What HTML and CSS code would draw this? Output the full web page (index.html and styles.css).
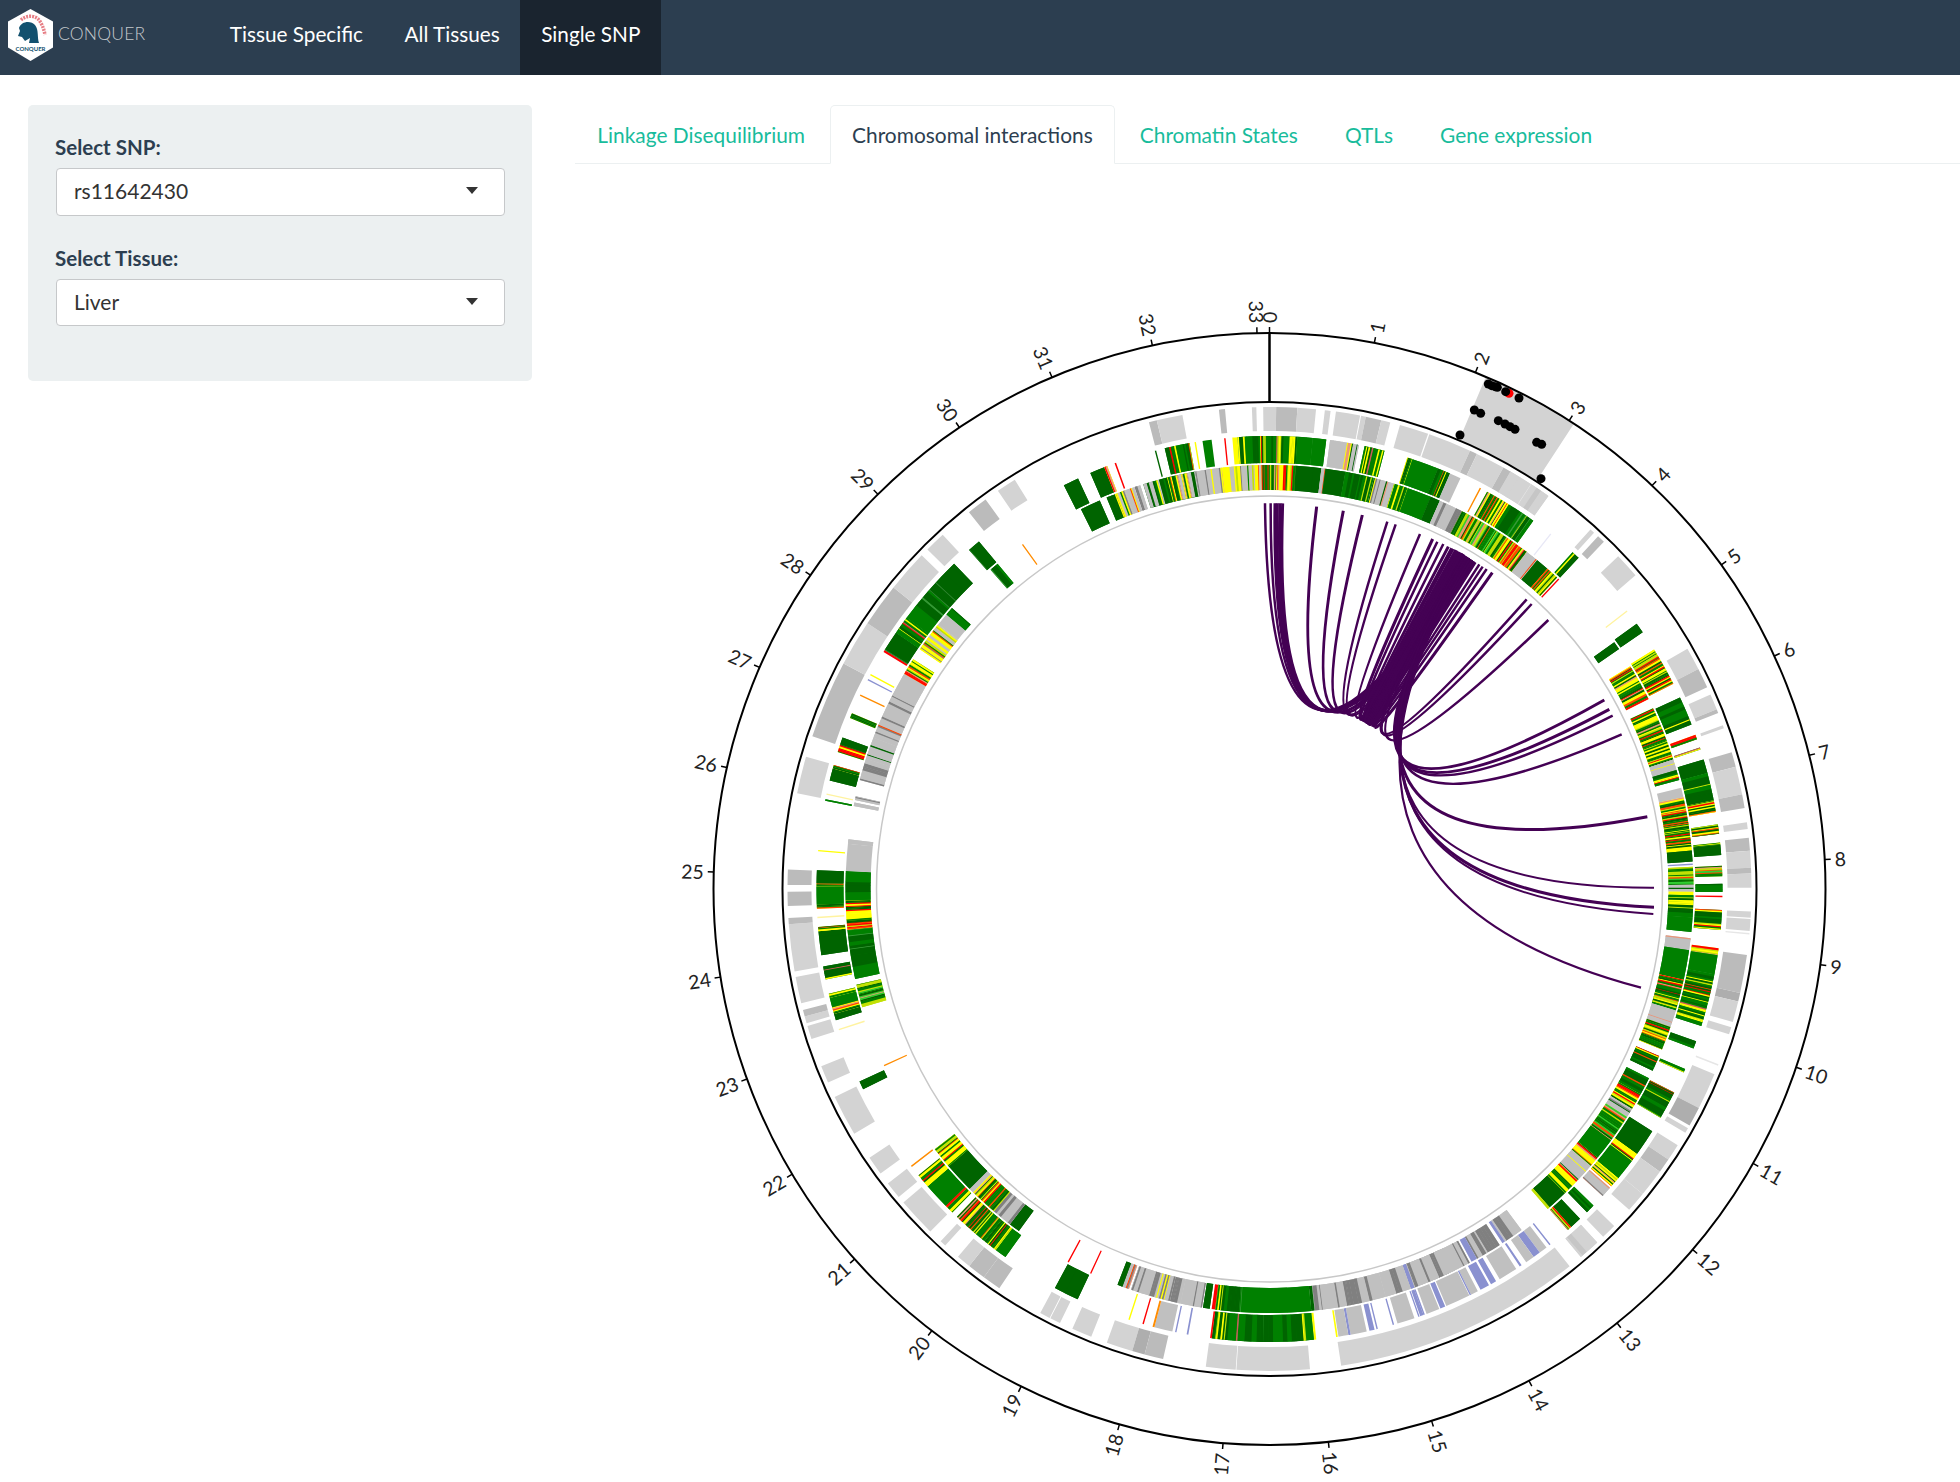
FILE: index.html
```html
<!DOCTYPE html>
<html lang="en">
<head>
<meta charset="utf-8">
<title>CONQUER - Single SNP</title>
<link rel="stylesheet" href="styles.css">
</head>
<body>
<nav class="navbar">
  <a class="brand" href="#">
    <svg class="logo" viewBox="0 0 46 54" width="46" height="54" aria-hidden="true">
      <polygon points="22.500,1 45,13.500 45,39.500 22.500,53 0,39.500 0,13.500" fill="#fff"/>
      <path d="M13 12 C18 7 27 7 31 12 C34 16 36 21 37 27" fill="none" stroke="#e77f86" stroke-width="3.500" stroke-dasharray="2 1"/>
      <path d="M11 20 C13 13 23 12 27 17 C31 22 29 29 31 35 L21 35 L22 30 L17 33 L14 29 L10 28 L12 23 Z" fill="#12516f"/>
      <text class="logo-text" x="22.500" y="43" text-anchor="middle">CONQUER</text>
    </svg>
    <span class="brand-name">CONQUER</span>
  </a>
  <ul class="nav-links">
    <li><a href="#">Tissue Specific</a></li>
    <li><a href="#">All Tissues</a></li>
    <li class="active"><a href="#">Single SNP</a></li>
  </ul>
</nav>
<main class="layout">
  <aside class="sidebar">
    <div class="field">
      <label>Select SNP:</label>
      <div class="select"><span>rs11642430</span><i class="caret"></i></div>
    </div>
    <div class="field">
      <label>Select Tissue:</label>
      <div class="select"><span>Liver</span><i class="caret"></i></div>
    </div>
  </aside>
  <section class="panel">
    <ul class="tabs">
      <li><a href="#">Linkage Disequilibrium</a></li>
      <li class="active"><a href="#">Chromosomal interactions</a></li>
      <li><a href="#">Chromatin States</a></li>
      <li><a href="#">QTLs</a></li>
      <li><a href="#">Gene expression</a></li>
    </ul>
    <svg id="circos" class="circos" viewBox="575 170 1385 1312" width="1385" height="1312"></svg>
  </section>
</main>
<script src="chart.js"></script>
</body>
</html>
```
FILE: styles.css
```css
* { box-sizing: border-box; }
html, body { margin: 0; padding: 0; }
body {
  height: 1482px;
  overflow: hidden;
  font-family: Lato, "Liberation Sans", sans-serif;
  font-size: 21px;
  color: #2c3e50;
  background: #fff;
}
a { text-decoration: none; color: inherit; }
ul { list-style: none; margin: 0; padding: 0; }

.navbar {
  display: flex;
  align-items: stretch;
  height: 75px;
  background: #2c3e50;
}
.brand {
  display: flex;
  align-items: center;
  width: 209px;
  padding-left: 8px;
  padding-bottom: 5px;
  gap: 4px;
}
.logo { display: block; }
.logo-text { font: 700 6px Lato, sans-serif; fill: #12516f; }
.brand-name { color: #c3c8cc; font-size: 17.500px; font-weight: 300; letter-spacing: .2px; padding-bottom: 3px; }
.nav-links { display: flex; font-size: 20.750px; }
.nav-links a {
  display: flex;
  align-items: center;
  height: 75px;
  padding: 0 20.750px 7px;
  color: #fff;
}
.nav-links .active a { background: #1a242f; }

.layout {
  display: flex;
  padding: 30px 0 0 28px;
  gap: 43px;
}
.sidebar {
  flex: none;
  width: 504px;
  height: 276px;
  padding: 27px 27px 0 28px;
  background: #ecf0f1;
  border-radius: 5px;
}
.field { margin-bottom: 27px; }
.field label { display: block; height: 36px; margin-left: -1px; line-height: 30px; font-size: 20.500px; font-weight: 700; }
.select {
  display: flex;
  align-items: center;
  justify-content: space-between;
  height: 47.500px;
  padding: 0 26px 2px 17px;
  background: #fff;
  border: 1px solid #c6c8ca;
  border-radius: 4px;
  color: #333;
}
.caret {
  width: 0;
  height: 0;
  border-left: 6.500px solid transparent;
  border-right: 6.500px solid transparent;
  border-top: 7.500px solid #333;
}

.panel { flex: 1; min-width: 0; }
.tabs {
  display: flex;
  height: 59px;
  font-size: 20.900px;
  border-bottom: 1px solid #ecf0f1;
}
.tabs li { margin-right: 2.500px; }
.tabs a {
  display: flex;
  align-items: center;
  height: 59px;
  padding: 0 21.300px;
  color: #18bc9c;
  border: 1px solid transparent;
  border-radius: 5px 5px 0 0;
}
.tabs .active a {
  color: #2c3e50;
  background: #fff;
  border-color: #ecf0f1 #ecf0f1 #fff;
}
.circos { display: block; margin-top: 6px; }

.ring { fill: none; stroke: #000; stroke-width: 2; }
.ring-inner { fill: none; stroke: #c8c8c8; stroke-width: 1.500; }
.tick { stroke: #000; stroke-width: 1.500; }
.zero { stroke: #000; stroke-width: 2.500; }
.tick-label { font: 19.500px Lato, sans-serif; fill: #222; dominant-baseline: central; }
.highlight { fill: #d3d3d3; }
.dot { fill: #000; }
.dot-snp { fill: #f00; }
.link { fill: none; stroke: #440154; }
```
FILE: chart.js
```js
(function () {
  var CX = 1269.5, CY = 889, UNIT = 10.87;
  var svg = document.getElementById('circos');
  var NS = 'http://www.w3.org/2000/svg';
  var TRACKS = { G: [458, 482], M: [426, 453], I: [399, 424] };
  // Source crops: data points below are given as [crop, x, y, x, y, palette]
  var CROP = {
    z2: [1140, 280], z3: [1500, 620], z4: [740, 500], z7: [1200, 480],
    z8: [770, 1000], z9: [1400, 1030], z10: [1130, 1240], z11: [770, 880]
  };

  var PAL = {
    Q:  [['#d3d3d3', 6, 4, 14], ['#c6c6c6', 2, 2, 6], ['#bbbbbb', 2, 2, 6], ['#e4e4e4', .6, .6, 1]],
    S:  [['#006400', 8, 8, 24], ['#2f852f', .6, .6, 1]],
    V:  [['#008000', 8, 8, 24], ['#3f9a3f', .6, .6, 1]],
    g:  [['#008000', 5, 2, 9], ['#006400', 4, 2, 8], ['#3a9a3a', 1.4, .6, 1], ['#c2e105', .6, .6, 1]],
    h:  [['#008000', 4, 3, 10], ['#006400', 3, 2, 7], ['#c2e105', 1, 1, 2.500], ['#ffff00', .4, .8, 1.500]],
    m:  [['#008000', 3.5, 1, 3.500], ['#006400', 3.5, 1, 3.500], ['#ffff00', 1.5, .6, 1.800], ['#c2e105', .9, .7, 1.500], ['#ff0000', .6, .5, 1.200], ['#ff4500', .5, .5, 1.200], ['#cd5c5c', .3, .8, 1.500]],
    r:  [['#ffff00', 3, .7, 2], ['#ff0000', 1.4, .6, 1.500], ['#ff4500', 1, .6, 1.500], ['#008000', 2.2, .7, 2], ['#006400', 1.8, .7, 2], ['#c2e105', .8, .7, 1.500], ['#e9967a', .5, .7, 1.500]],
    l:  [['#c2e105', 3, .8, 2], ['#008000', 3, .8, 2.500], ['#ff4500', 1, .6, 1.500], ['#e9967a', 1, .8, 1.500], ['#32cd32', 2, .8, 2], ['#006400', 1.5, .8, 2]],
    j:  [['#ffff00', 3, .8, 2], ['#c0c0c0', 3, 1, 3], ['#c2e105', 1.5, 1, 2], ['#008000', 1.2, 1, 2], ['#808080', .6, .8, 1.500], ['#ff4500', .6, .7, 1.200]],
    n:  [['#006400', 2.5, 1, 2.500], ['#008000', 2, 1, 2.500], ['#ffff00', 2, .7, 1.500], ['#c0c0c0', 2, 1, 4], ['#ff4500', .6, .7, 1.200], ['#e9967a', .6, .7, 1.200]],
    x:  [['#c0c0c0', 7, 2, 8], ['#808080', 2.5, .7, 2.500]],
    d:  [['#c0c0c0', 5, 1.5, 6], ['#808080', 4, .8, 5]],
    y:  [['#c0c0c0', 5, 1.5, 5], ['#808080', 1.5, .8, 2], ['#ffff00', 1.2, .7, 1.500], ['#ff4500', .6, .6, 1.200], ['#e9967a', 1, .8, 1.500], ['#006400', .6, .8, 1.500]]
  };
  var COL = {
    L: '#d3d3d3', D: '#bbbbbb', B: '#aeaeae', W: '#e6e6e6',
    A: '#006400', E: '#008000', Y: '#ffff00', R: '#ff0000', O: '#ff8c00',
    C: '#c0c0c0', H: '#808080', N: '#8a91d0', K: '#c2e105', F: '#e8e8f6', P: '#fff3a0'
  };

  var G = [
    ['z2',25,420,50,420,'D'],['z2',50,420,130,420,'L'],['z2',240,420,258,420,'D'],['z2',337,420,350,420,'L'],
    ['z2',370,420,408,420,'L'],['z2',408,420,470,420,'D'],['z2',470,420,525,420,'L'],['z2',550,430,567,430,'L'],
    ['z2',583,430,655,435,'L'],['z2',658,435,672,437,'L'],['z2',672,437,718,445,'D'],['z2',718,445,745,450,'L'],
    ['z2',770,470,852,497,'L'],['z2',856,497,975,545,'L'],['z2',975,545,995,555,'D'],['z2',995,555,1075,590,'L'],['z2',1075,590,1100,600,'D'],
    ['z2',1095,603,1208,672,'Q'],['z7',1150,172,1162,180,'L'],['z7',1172,193,1190,208,'D'],
    ['z2',1407,855,1462,907,'L'],
    ['z3',532,104,560,165,'L'],['z3',560,165,588,217,'D'],['z3',596,239,615,282,'L'],['z3',615,282,622,292,'D'],
    ['z3',632,329,637,337,'L'],
    ['z3',660,407,669,450,'D'],['z3',669,450,690,530,'L'],['z3',690,530,697,570,'D'],
    ['z3',705,612,706,632,'L'],['z3',711,657,713,695,'D'],['z3',713,695,716,745,'L'],['z3',716,745,717,762,'D'],['z3',717,762,718,803,'L'],
    ['z3',715,873,715,891,'L'],['z3',714,895,714,930,'L'],['z3',712,936,711,940,'W'],
    ['z3',703,1000,680,1110,'D'],['z3',680,1110,675,1135,'B'],['z3',675,1135,660,1195,'L'],['z3',655,1210,652,1232,'L'],
    ['z3',622,1320,618,1323,'W'],
    ['z9',908,118,860,215,'L'],['z9',860,215,840,270,'B'],['z9',830,275,825,290,'L'],
    ['z9',800,325,770,365,'L'],['z9',770,365,745,400,'D'],['z9',745,400,695,465,'L'],['z9',695,465,660,515,'L'],
    ['z9',615,561,585,595,'L'],['z9',563,606,520,654,'Q'],['z9',487,681,-182,970,'L'],
    ['z10',232,345,320,348,'L'],['z10',322,348,537,352,'L'],
    ['z8',1022,996,1095,1025,'L'],['z8',1095,1025,1130,1040,'B'],['z8',1130,1040,1185,1052,'D'],
    ['z8',977,977,922,953,'L'],['z8',886,936,858,922,'L'],['z8',856,920,828,907,'L'],
    ['z8',710,832,665,800,'D'],['z8',665,800,620,770,'D'],['z8',620,770,588,742,'L'],
    ['z8',550,710,540,694,'L'],['z8',505,670,430,582,'L'],['z8',415,567,381,529,'L'],['z8',360,500,329,453,'L'],
    ['z8',283,383,227,275,'L'],['z8',207,233,188,185,'L'],
    ['z11',159,466,147,428,'L'],['z11',144,420,140,400,'L'],['z11',140,400,135,381,'D'],
    ['z11',130,361,114,284,'L'],['z11',110,268,92,130,'L'],['z11',92,130,92,112,'D'],
    ['z4',180,1175,180,1217,'D'],['z4',180,1110,180,1155,'D'],
    ['z4',208,887,233,780,'L'],['z4',253,721,338,505,'D'],['z4',338,505,405,385,'L'],['z4',405,385,495,290,'D'],['z4',495,290,571,191,'L'],
    ['z4',586,172,632,130,'L'],['z4',712,68,756,25,'D']
  ];
  var GD = [[-34.3, -31.9, 'L']];

  var M = [
    ['z2',55,545,'A'],['z2',80,530,155,525,'m'],['z2',172,525,'Y'],['z2',193,520,220,520,'E'],['z2',258,510,'R'],
    ['z2',280,510,295,510,'Y'],['z2',295,510,370,505,'m'],['z2',370,505,470,505,'m'],['z2',470,505,515,510,'V'],['z2',515,510,555,510,'V'],
    ['z2',565,520,650,530,'y'],['z2',665,540,725,545,'m'],
    ['z2',785,585,800,590,'r'],['z2',800,590,880,600,'V'],['z2',880,600,915,615,'m'],['z2',915,615,945,630,'C'],
    ['z2',1005,655,'O'],['z2',1022,670,1090,700,'r'],['z2',1090,700,1160,750,'g'],['z2',1210,790,'F'],['z2',1274,843,1291,860,'m'],
    ['z3',340,5,'P'],['z3',384,30,396,59,'S'],
    ['z3',431,108,487,208,'r'],['z3',506,248,542,326,'m'],['z3',552,357,557,370,'r'],['z3',565,394,567,400,'m'],
    ['z3',575,429,582,470,'S'],['z3',582,470,604,548,'g'],['z3',604,548,611,582,'r'],
    ['z3',618,618,620,646,'m'],['z3',623,671,625,678,'r'],['z3',625,678,626,708,'S'],['z3',628,739,628,770,'l'],['z3',630,792,630,816,'m'],['z3',630,829,'R'],['z3',627,868,626,927,'m'],
    ['z3',618,980,613,1000,'r'],['z3',613,1000,603,1055,'V'],['z3',603,1055,570,1207,'m'],['z3',550,1250,545,1272,'m'],
    ['z9',820,102,817,112,'m'],['z9',788,170,752,246,'m'],
    ['z9',727,285,680,350,'S'],['z9',680,350,665,370,'r'],['z9',665,370,625,420,'V'],['z9',625,420,610,448,'r'],
    ['z9',600,447,580,472,'y'],['z9',553,500,535,520,'m'],['z9',515,540,490,565,'S'],['z9',490,565,480,574,'r'],
    ['z9',427,615,'N'],['z9',417,623,395,635,'C'],['z9',395,635,375,645,'N'],['z9',375,645,352,658,'C'],
    ['z9',342,672,337,676,'N'],['z9',325,680,280,715,'C'],['z9',270,722,255,730,'N'],['z9',250,735,225,748,'N'],
    ['z9',215,748,195,758,'C'],['z9',193,758,'N'],['z9',190,760,125,795,'C'],['z9',122,797,108,803,'N'],['z9',105,805,70,825,'C'],['z9',60,820,'N'],['z9',45,826,'N'],
    ['z10',868,190,858,192,'N'],['z10',840,195,792,215,'C'],['z10',780,218,'N'],['z10',733,232,'N'],['z10',725,232,710,235,'N'],
    ['z10',702,237,655,245,'C'],['z10',655,245,648,245,'N'],['z10',648,245,620,255,'C'],['z10',618,255,613,255,'Y'],
    ['z10',555,262,548,262,'Y'],['z10',548,262,400,260,'h'],['z10',400,260,325,258,'h'],['z10',325,258,250,258,'m'],['z10',250,258,245,258,'R'],
    ['z10',181,250,176,250,'N'],['z10',145,240,'N'],['z10',135,238,82,228,'C'],['z10',82,228,76,228,'O'],['z10',50,215,'R'],['z10',5,215,'Y'],
    ['z8',938,866,872,832,'S'],['z8',728,741,700,720,'V'],['z8',700,720,670,690,'r'],['z8',670,690,640,670,'m'],['z8',640,670,585,625,'r'],
    ['z8',572,612,555,590,'r'],['z8',555,590,500,535,'V'],['z8',500,535,475,502,'r'],['z8',454,476,'O'],
    ['z8',315,250,300,230,'S'],['z8',240,78,'P'],
    ['z11',232,410,228,392,'S'],['z11',228,392,222,372,'r'],['z11',222,372,215,345,'V'],['z11',215,345,212,333,'r'],
    ['z11',204,291,196,253,'m'],['z11',191,220,183,150,'S'],['z11',183,150,181,138,'r'],['z11',178,110,'P'],
    ['z4',267,1225,267,1212,'r'],['z4',267,1212,268,1160,'V'],['z4',268,1160,268,1150,'r'],['z4',268,1150,267,1112,'S'],['z4',270,1055,'Y'],
    ['z4',292,907,'m'],['z4',295,890,'P'],['z4',306,851,313,815,'S'],['z4',313,815,316,805,'r'],
    ['z4',330,768,337,745,'r'],['z4',337,745,342,725,'S'],['z4',364,668,370,654,'r'],['z4',394,601,'O'],['z4',417,556,'N'],['z4',423,541,'Y'],
    ['z4',462,475,466,470,'R'],['z4',466,470,500,420,'S'],['z4',500,420,530,375,'m'],['z4',530,375,590,290,'g'],['z4',590,290,666,216,'S'],
    ['z4',712,178,740,152,'S']
  ];
  var MD = [[-27, -25, 'S'], [-23.3, -21.4, 'S'], [-21.4, -21, 'r'], [-20, -19.8, 'R']];

  var I = [
    ['z2',0,670,15,660,'y'],['z2',15,630,170,600,'n'],['z2',170,600,250,595,'y'],['z2',250,595,365,595,'j'],['z2',365,595,465,600,'r'],
    ['z2',465,600,540,600,'S'],['z2',540,600,552,600,'y'],['z2',552,600,610,610,'S'],['z2',610,610,695,620,'m'],['z2',695,620,755,635,'y'],
    ['z2',755,635,795,650,'m'],['z2',795,650,860,680,'V'],['z2',860,680,885,695,'S'],['z2',885,695,950,725,'d'],
    ['z2',950,725,1075,790,'l'],['z2',1075,790,1150,830,'r'],['z2',1150,830,1180,855,'y'],['z2',1180,855,1210,880,'S'],['z2',1210,880,1240,905,'r'],['z2',1230,925,'R'],
    ['z3',314,87,325,109,'S'],['z3',359,158,410,255,'r'],
    ['z3',426,280,485,430,'r'],['z3',485,430,495,460,'y'],['z3',495,460,501,490,'m'],
    ['z3',508,512,512,540,'C'],['z3',512,540,538,695,'r'],['z3',538,695,540,727,'S'],['z3',540,735,'N'],
    ['z3',540,742,540,795,'l'],['z3',540,795,540,815,'y'],['z3',540,815,540,825,'Y'],['z3',540,825,540,890,'m'],['z3',540,890,537,932,'V'],
    ['z3',534,950,530,985,'y'],['z3',530,985,510,1070,'V'],['z3',510,1070,505,1100,'r'],['z3',505,1100,490,1160,'m'],['z3',490,1160,480,1210,'y'],['z3',480,1210,452,1275,'r'],
    ['z9',740,62,722,105,'m'],['z9',712,127,690,175,'m'],['z9',690,175,660,215,'r'],['z9',660,215,640,235,'y'],['z9',640,235,590,300,'l'],['z9',590,300,600,307,'r'],
    ['z9',600,307,565,360,'V'],['z9',565,360,545,385,'r'],['z9',545,385,505,425,'y'],['z9',505,425,470,465,'r'],['z9',470,465,425,505,'S'],['z9',425,505,420,510,'l'],
    // lower-right grey/blue arc
    ['z9',335,560,285,590,'d'],['z9',285,590,278,595,'N'],['z9',270,600,205,640,'d'],['z9',205,640,190,650,'N'],['z9',185,652,130,690,'x'],['z9',130,690,85,705,'d'],['z9',85,705,30,735,'x'],['z9',30,735,20,740,'N'],
    ['z10',975,90,845,120,'x'],['z10',845,120,835,125,'N'],['z10',835,125,760,145,'d'],['z10',760,145,550,170,'d'],
    ['z10',550,175,540,175,'A'],['z10',540,175,330,175,'V'],['z10',330,175,260,170,'m'],['z10',260,170,250,170,'R'],
    ['z10',245,165,225,165,'S'],['z10',222,165,160,150,'x'],['z10',160,150,130,140,'d'],['z10',130,140,85,125,'y'],['z10',85,125,20,100,'d'],
    ['z8',1090,830,1070,825,'y'],['z8',1070,825,1055,822,'S'],['z8',977,788,'R'],['z8',912,754,'R'],
    ['z8',770,661,745,640,'S'],['z8',745,640,700,600,'d'],['z8',700,600,640,545,'r'],['z8',640,545,630,535,'y'],['z8',630,535,575,465,'S'],['z8',575,465,524,425,'r'],
    ['z8',377,181,'O'],
    ['z11',313,371,296,306,'l'],['z4',378,1430,365,1285,'g'],['z4',365,1285,357,1240,'r'],['z4',357,1240,356,1200,'r'],['z4',356,1200,357,1115,'g'],
    ['z4',357,1115,360,1035,'C'],['z4',360,1035,362,1022,'d'],
    ['z4',378,925,380,915,'y'],['z4',382,908,384,897,'y'],
    ['z4',396,850,420,790,'d'],['z4',420,790,445,730,'y'],['z4',445,730,470,675,'y'],['z4',470,675,525,540,'x'],['z4',525,540,550,497,'r'],
    ['z4',572,470,622,395,'j'],['z4',622,395,645,365,'C'],['z4',645,365,662,347,'m'],
    ['z4',776,237,796,219,'g'],['z4',868,162,'O']
  ];
  var ID = [[-26.4, -23.6, 'S'], [-22.6, -21.2, 'm'], [-21.2, -19.9, 'j'], [-19.9, -18.6, 'y']];

  function el(name, attrs, text) {
    var n = document.createElementNS(NS, name);
    for (var k in attrs) n.setAttribute(k, attrs[k]);
    if (text !== undefined) n.textContent = text;
    svg.appendChild(n);
    return n;
  }
  function pt(r, deg) {
    var a = deg * Math.PI / 180;
    return [CX + r * Math.sin(a), CY - r * Math.cos(a)];
  }
  function angle(crop, x, y) {
    var o = CROP[crop];
    return Math.atan2(o[0] + x / 3 - CX, -(o[1] + y / 3 - CY)) * 180 / Math.PI;
  }
  function f(n) { return n.toFixed(2); }
  function sector(r0, r1, a0, a1, fill) {
    var p = pt(r1, a0), q = pt(r1, a1), s = pt(r0, a1), t = pt(r0, a0);
    var large = a1 - a0 > 180 ? 1 : 0;
    el('path', {
      fill: fill,
      d: 'M' + f(p[0]) + ' ' + f(p[1]) + 'A' + r1 + ' ' + r1 + ' 0 ' + large + ' 1 ' + f(q[0]) + ' ' + f(q[1]) +
         'L' + f(s[0]) + ' ' + f(s[1]) + 'A' + r0 + ' ' + r0 + ' 0 ' + large + ' 0 ' + f(t[0]) + ' ' + f(t[1]) + 'Z'
    });
  }
  var seed = 20477;
  function rnd() {
    seed = (seed + 0x6D2B79F5) | 0;
    var t = Math.imul(seed ^ (seed >>> 15), 1 | seed);
    t = (t + Math.imul(t ^ (t >>> 7), 61 | t)) ^ t;
    return ((t ^ (t >>> 14)) >>> 0) / 4294967296;
  }
  function stripes(r, a0, a1, palette) {
    var mid = (r[0] + r[1]) / 2, pxDeg = Math.PI * mid / 180;
    var total = palette.reduce(function (s, i) { return s + i[1]; }, 0);
    var len = (a1 - a0) * pxDeg, pos = 0;
    sector(r[0], r[1], a0, a1, palette[0][0]);
    while (pos < len) {
      var pick = rnd() * total, k = 0;
      while (pick > palette[k][1]) { pick -= palette[k][1]; k++; }
      var it = palette[k], w = it[2] + rnd() * (it[3] - it[2]);
      var end = Math.min(pos + w, len);
      sector(r[0], r[1], a0 + pos / pxDeg, a0 + Math.min(end + .35, len) / pxDeg, it[0]);
      pos = end;
    }
  }
  function draw(r, a0, a1, key) {
    if (PAL[key]) stripes(r, a0, a1, PAL[key]);
    else sector(r[0], r[1], a0, a1, COL[key]);
  }
  function block(r, row) {
    var a0, a1, key;
    if (row.length === 4) {
      var c = angle(row[0], row[1], row[2]);
      a0 = c - .09; a1 = c + .09; key = row[3];
    } else {
      a0 = angle(row[0], row[1], row[2]);
      a1 = angle(row[0], row[3], row[4]);
      key = row[5];
      var d = ((a1 - a0 + 540) % 360) - 180;
      if (d < 0) { a0 = a1; d = -d; }
      a1 = a0 + d;
    }
    draw(r, a0, a1, key);
  }

  // Tracks
  G.forEach(function (row) { block(TRACKS.G, row); });
  GD.forEach(function (d) { draw(TRACKS.G, d[0], d[1], d[2]); });
  M.forEach(function (row) { block(TRACKS.M, row); });
  MD.forEach(function (d) { draw(TRACKS.M, d[0], d[1], d[2]); });
  I.forEach(function (row) { block(TRACKS.I, row); });
  ID.forEach(function (d) { draw(TRACKS.I, d[0], d[1], d[2]); });

  // Highlighted region and scatter
  var hA = pt(487, 22.9), hB = pt(555, 22.9), hC = pt(555, 33.2), hD = pt(487, 33.2);
  el('path', { class: 'highlight', d: 'M' + f(hA[0]) + ' ' + f(hA[1]) + 'L' + f(hB[0]) + ' ' + f(hB[1]) +
    'A555 555 0 0 1 ' + f(hC[0]) + ' ' + f(hC[1]) + 'L' + f(hD[0]) + ' ' + f(hD[1]) + 'A487 487 0 0 0 ' + f(hA[0]) + ' ' + f(hA[1]) + 'Z' });
  el('circle', { class: 'dot-snp', cx: 1140 + 1107 / 3, cy: 280 + 340 / 3, r: 4.5 });
  [[1045,312],[1055,317],[1065,320],[1072,322],[1097,335],[1137,354],[1003,390],[1022,400],[1075,422],[1095,432],
   [1110,440],[1125,448],[960,465],[1190,487],[1205,493],[1203,596]].forEach(function (d) {
    el('circle', { class: 'dot', cx: 1140 + d[0] / 3, cy: 280 + d[1] / 3, r: 4.5 });
  });

  // Rings, axis
  el('circle', { class: 'ring-inner', cx: CX, cy: CY, r: 393 });
  el('circle', { class: 'ring', cx: CX, cy: CY, r: 487 });
  el('circle', { class: 'ring', cx: CX, cy: CY, r: 556 });
  el('line', { class: 'zero', x1: CX, y1: CY - 487, x2: CX, y2: CY - 556 });
  for (var i = 0; i <= 33; i++) {
    var a = i * UNIT, t0 = pt(556, a), t1 = pt(562, a);
    el('line', { class: 'tick', x1: t0[0], y1: t0[1], x2: t1[0], y2: t1[1] });
    var left = a > 180;
    el('text', {
      class: 'tick-label',
      'text-anchor': left ? 'end' : 'start',
      transform: 'rotate(' + f(a - 90) + ' ' + CX + ' ' + CY + ') translate(' + (CX + 566) + ' ' + CY + ')' + (left ? ' rotate(180)' : '')
    }, String(i));
  }

  // Interaction links: quadratic curves through the circle centre
  var snp = 31;
  var ends = [
    ['z7',195,70,2.5],['z7',212,70,2.5],['z7',225,70,3],['z7',232,70,3],['z7',240,70,3],['z7',248,70,3],
    ['z7',350,80,3],['z7',430,92,3],['z7',487,105,3],['z7',562,125,2.5],['z7',587,133,2.5],['z7',660,162,2.5],
    ['z7',698,177,3],['z7',712,185,2.5],['z7',745,200,3],['z7',755,205,3],['z7',768,210,3.5],['z7',775,214,3.5],['z7',782,218,3.5],
    ['z7',790,222,3.5],['z7',797,228,3],['z7',805,232,3.5],['z7',815,240,3.5],['z7',825,246,3.5],['z7',848,260,2.5],['z7',860,267,2.5],['z7',877,278,3],
    ['z7',730,192,2.5],['z7',760,207,2.5],['z7',786,220,3],['z7',793,224,3],['z7',800,230,3],['z7',810,236,3],['z7',820,243,3],['z7',838,253,2.5],
    ['z7',980,358,2.5],['z7',995,372,2.5],['z7',1045,420,2.5],
    ['z3',313,240,3],['z3',328,268,3],['z3',338,287,2.5],['z3',365,343,2.5],['z3',442,590,3],['z3',462,803,2],['z3',462,862,3],['z3',460,882,2],['z3',423,1103,2.2]
  ];
  ends.forEach(function (e, n) {
    var o = CROP[e[0]], x = o[0] + e[1] / 3, y = o[1] + e[2] / 3;
    var s = pt(386, snp + (n % 7 - 3) * .2);
    el('path', {
      class: 'link', 'stroke-width': e[3],
      d: 'M' + f(x) + ' ' + f(y) + 'Q' + CX + ' ' + CY + ' ' + f(s[0]) + ' ' + f(s[1])
    });
  });
})();
```
